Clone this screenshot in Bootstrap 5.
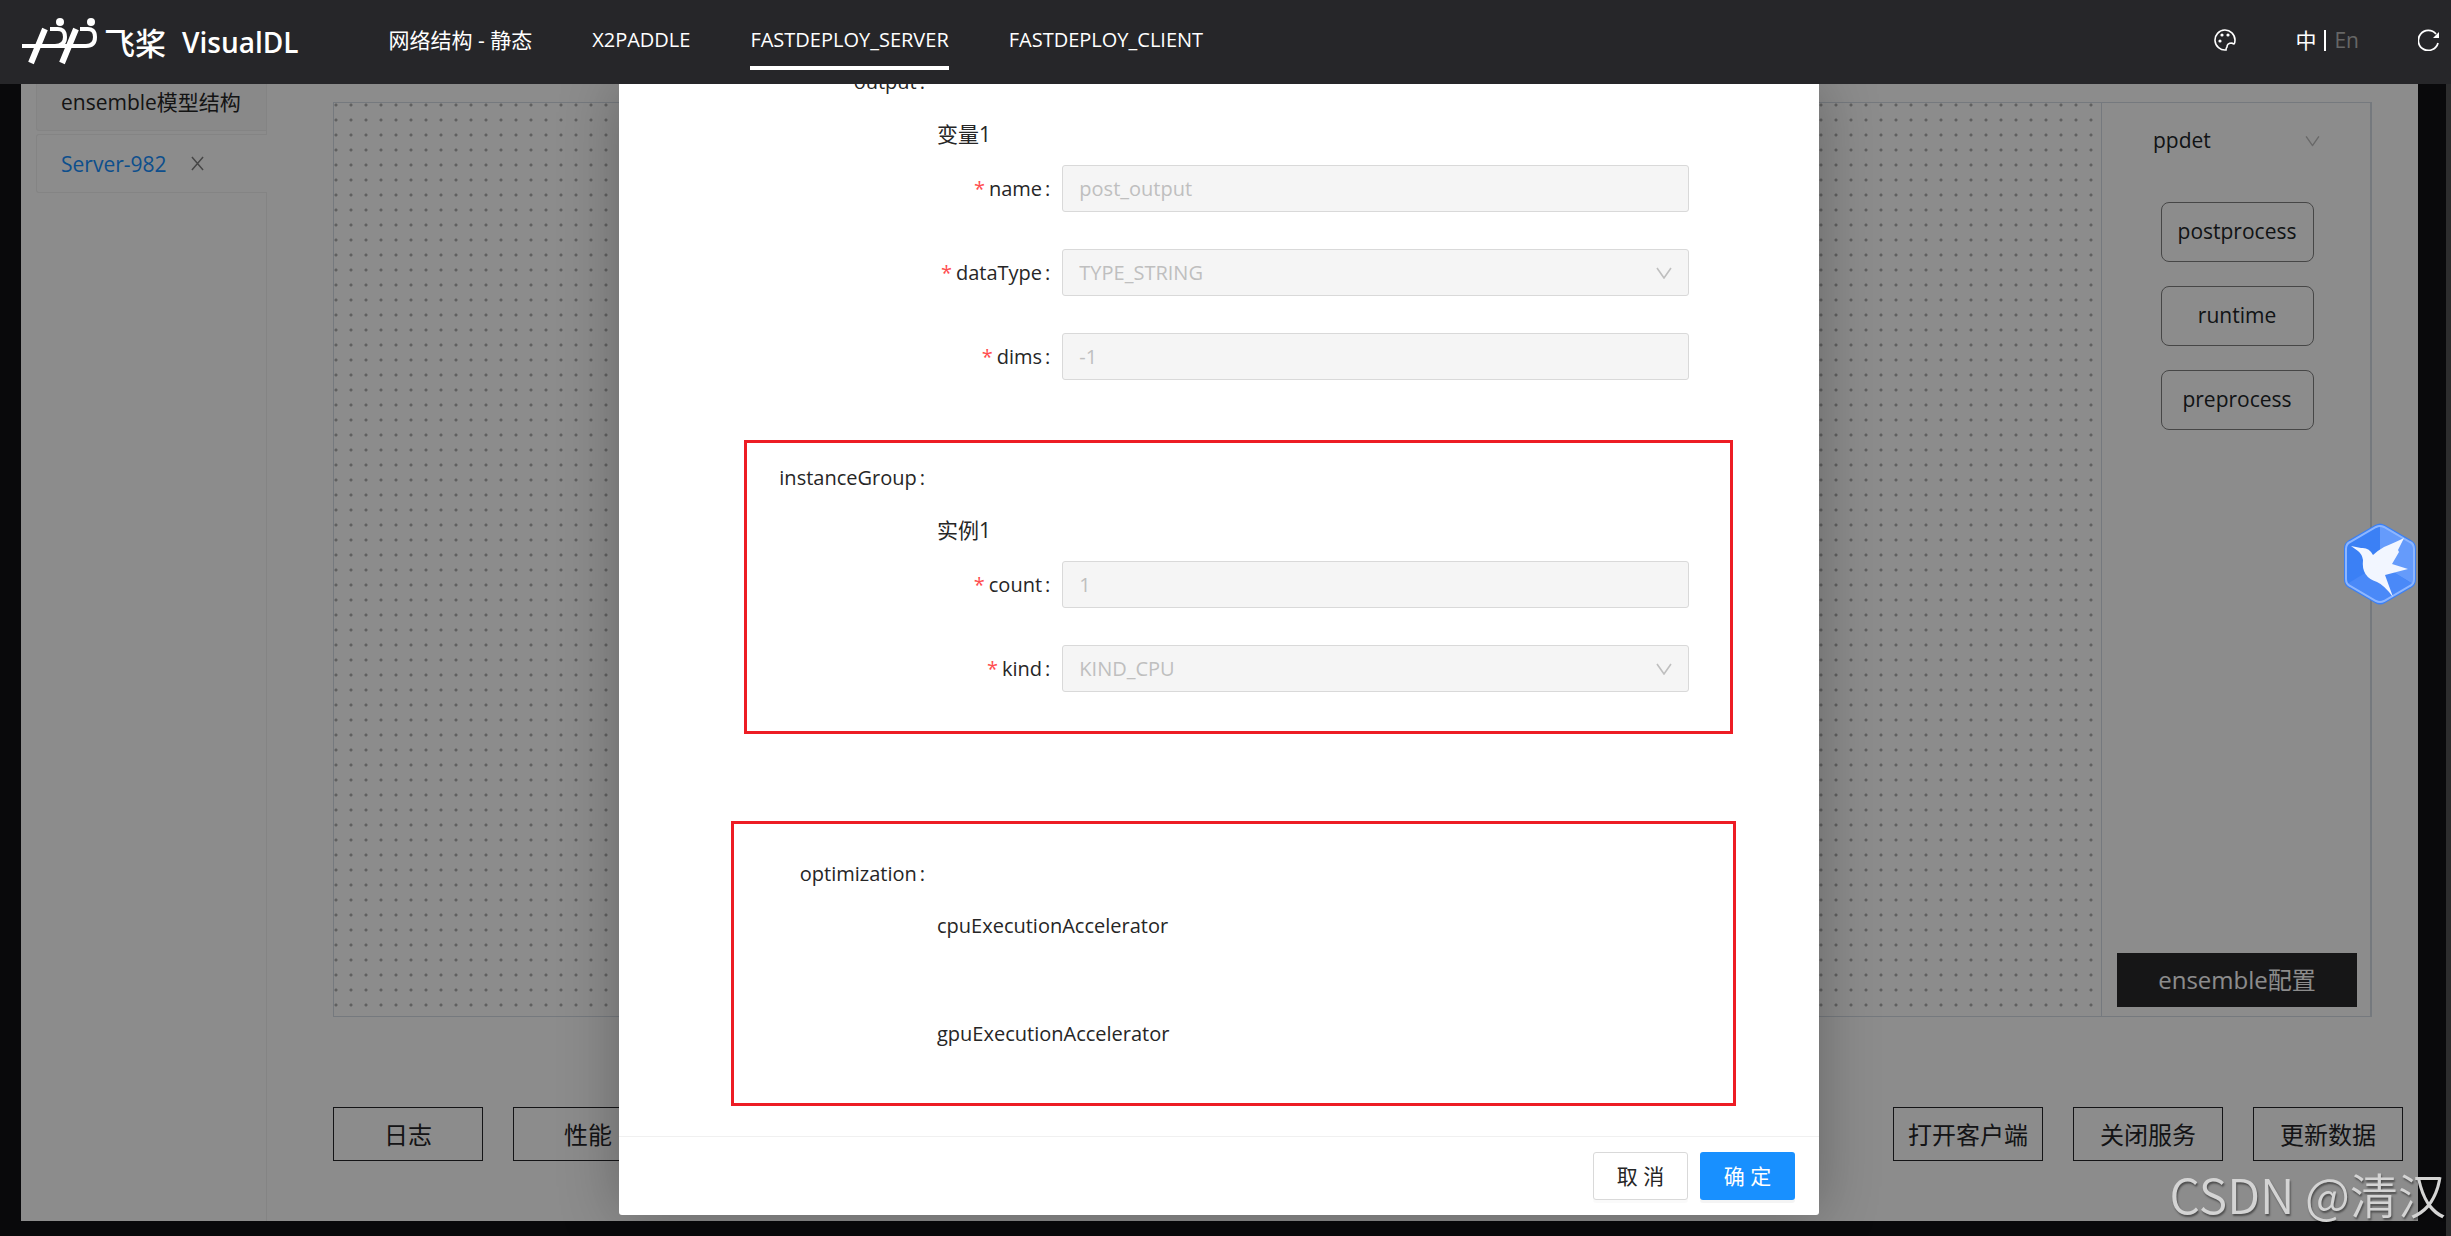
<!DOCTYPE html>
<html lang="zh-CN">
<head>
<meta charset="utf-8">
<meta name="viewport" content="width=device-width, initial-scale=1">
<title>VisualDL</title>
<link href="https://cdn.jsdelivr.net/npm/bootstrap@5.3.0/dist/css/bootstrap.min.css" rel="stylesheet">
<style>
  body { font-family: "Open Sans", "Noto Sans CJK SC", sans-serif; font-size: 20px; line-height: 32px; color: #262626; background: #121214; }
  .zh { font-size: 21px; }
  .topbar { height: 84px; background: #262629; padding: 0 11px 0 20px; z-index: 3; }
  .brand-cn { font-family: "Noto Sans CJK SC", sans-serif; font-weight: 500; font-size: 31px; line-height: 40px; }
  .brand-en { font-weight: 600; font-size: 28px; line-height: 40px; }
  .topnav { margin-left: 90px; gap: 60px; }
  .topnav .nav-link { padding: 22px 0 26px; line-height: 32px; color: #fff; }
  .topnav .active::after { content: ""; position: absolute; left: 0; right: 0; bottom: 12px; height: 4px; background: #fff; }
  .tools { gap: 59px; padding-bottom: 4px; }
  .lang-bar { width: 2px; height: 21px; background: #fff; margin: 0 8px; }
  .lang-off { color: #666; }
  .lower { min-height: 0; }
  .stage { min-height: 0; padding: 0 33px 15px 21px; }
  .scroll-track { width: 5px; background: #525255; }
  .sidebar { width: 246px; padding-left: 15px; }
  .side-tab { border: 1px solid #f0f0f0; padding-left: 24px; }
  .tab-a { height: 47px; background: #fafafa; border-top: 0; border-radius: 0 0 0 3px; padding-bottom: 10px; }
  .side-line { border-right: 1px solid #f0f0f0; min-height: 3px; }
  .tab-b { height: 59px; border-right: 0; border-radius: 3px 0 0 3px; color: #1890ff; font-size: 21px; }
  .workspace { padding: 18px 15px 60px 66px; }
  .board { margin: 0 31px 90px 0; border: 1px solid #d6dde5; border-right-width: 2px; }
  .dots { background: radial-gradient(circle at 2px 2px, #b0b0b0 1px, transparent 2px) 0 0 / 15px 15px; }
  .palette-col { width: 269px; border-left: 1px solid #d6dde5; padding: 14px 13px 9px 15px; }
  .model-pick { width: 200px; margin-bottom: 37px; }
  .model-pick select { height: 48px; padding: 0 16px; border: 0; background: none; font-size: 21px; }
  .node-btn { width: 153px; height: 60px; border: 1px solid #808080; border-radius: 8px; font-size: 21px; padding: 0; }
  .conf-btn { height: 54px; background: #28282b; color: #fff; font-size: 24px; border-radius: 0; }
  .act-row { gap: 30px; }
  .act-btn { width: 150px; height: 54px; border: 1px solid #262629; border-radius: 0; font-size: 24px; padding: 2px 0 0; color: #262629; }
  .shade { background: rgba(0,0,0,.45); padding: 0 13px 21px 0; z-index: 1; }
  .dialog { width: 1200px; border-radius: 0 0 3px 3px; box-shadow: 0 0 60px rgba(0,0,0,.28); }
  .dialog-body { min-height: 0; padding: 0 36px; }
  .row-head, .field { min-height: 48px; }
  .row-head .cap, .field label { line-height: 48px; }
  .colon { margin: 0 12px 0 3px; }
  .sub-head { line-height: 56px; margin-bottom: 3px; }
  .field { margin-bottom: 36px; }
  .req { color: #ff4d4f; margin-right: 4px; }
  .field .form-control, .field .form-select { height: 47px; border: 1px solid #d9d9d9; border-radius: 3px; background: #f5f5f5; color: #bfbfbf; font-size: 20px; padding: 0 16px; opacity: 1; }
  .caret { right: 17px; top: 50%; transform: translateY(-50%); color: #bfbfbf; pointer-events: none; }
  .sec-out { margin-bottom: 37px; }
  .sec-inst { margin-bottom: 121px; }
  .sec-opt { padding-bottom: 74px; }
  .sub-gap { margin-bottom: 52px; }
  .frame { border: 3px solid #ed1c24; pointer-events: none; }
  .frame-inst { top: -14px; bottom: 31px; left: 89px; right: 50px; }
  .frame-inst { bottom: -5px; }
  .frame-opt { top: -29px; bottom: 30px; left: 76px; right: 47px; }
  .dialog-foot { border-top: 1px solid #f0f0f0; padding: 15px 24px; gap: 12px; }
  .dialog-foot .btn { width: 95px; height: 48px; border-radius: 3px; font-size: 21px; padding: 2px 0 0; }
  .btn-no { background: #fff; border: 1px solid #d9d9d9; color: #262626; box-shadow: 0 3px 0 rgba(0,0,0,.02); }
  .btn-yes { background: #1890ff; border: 0; color: #fff; box-shadow: 0 3px 0 rgba(0,0,0,.045); }
  .bird { right: 34px; top: 438px; z-index: 2; }
  .watermark { right: 5px; bottom: 7px; z-index: 4; font-family: "Noto Sans CJK SC", sans-serif; font-weight: 350; font-size: 48px; line-height: 72px; color: #d4d4d4; text-shadow: 1px 2px 2px rgba(0,0,0,.45); pointer-events: none; }
</style>
<script src="https://cdn.jsdelivr.net/npm/bootstrap@5.3.0/dist/js/bootstrap.bundle.min.js"></script>
</head>
<body class="vh-100 d-flex flex-column overflow-hidden">
<header class="topbar d-flex align-items-center flex-shrink-0 position-relative text-white">
  <a href="#" class="d-flex align-items-center text-white text-decoration-none">
    <svg width="80" height="48" viewBox="0 0 80 48" aria-hidden="true" fill="none" stroke="#fff">
      <path d="M25 11 11 45M56 11 42 45" stroke-width="6"/>
      <path d="M2 28H35q10 0 10-9t-9-8h-6M37 28H66q9 0 9-9t-9-8h-6" stroke-width="4"/>
      <circle cx="40" cy="4" r="4" fill="#fff" stroke="none"/><circle cx="71" cy="4" r="4" fill="#fff" stroke="none"/>
    </svg>
    <span class="brand-cn ms-1">飞桨</span>
    <span class="brand-en ms-2 ps-2">VisualDL</span>
  </a>
  <nav class="nav topnav">
    <a class="nav-link zh" href="#">网络结构 - 静态</a>
    <a class="nav-link" href="#">X2PADDLE</a>
    <a class="nav-link active position-relative" href="#">FASTDEPLOY_SERVER</a>
    <a class="nav-link" href="#">FASTDEPLOY_CLIENT</a>
  </nav>
  <div class="tools d-flex align-items-center ms-auto">
    <button class="btn p-0 border-0 text-white d-flex" aria-label="主题"><svg width="22" height="22" viewBox="0 0 22 22" fill="none" stroke="#fff" stroke-width="1.6"><path d="M12 21A10 10 0 1 1 21 11q0 3-1 4-1 0-2-1-5 0-5 4-1 1-1 3z"/><g fill="#fff" stroke="none"><circle cx="8" cy="6" r="1.6"/><circle cx="14" cy="6" r="1.6"/><circle cx="6" cy="12" r="1.6"/></g></svg></button>
    <div class="d-flex align-items-center zh"><span>中</span><span class="lang-bar"></span><span class="lang-off">En</span></div>
    <button class="btn p-0 border-0 text-white d-flex" aria-label="刷新"><svg width="22" height="22" viewBox="0 0 22 22" fill="none" stroke="#fff" stroke-width="1.8"><path d="M20 14A10 10 0 1 1 18 5"/><path d="M21 3v6h-6z" fill="#fff" stroke="none"/></svg></button>
  </div>
</header>

<div class="lower d-flex flex-fill position-relative">
  <main class="stage flex-fill d-flex">
    <div class="flex-fill d-flex bg-white">
      <aside class="sidebar d-flex flex-column flex-shrink-0">
        <div class="side-tab tab-a d-flex align-items-center zh">ensemble模型结构</div>
        <div class="side-line"></div>
        <div class="side-tab tab-b d-flex align-items-center">Server-982
          <button class="btn p-0 border-0 ms-4" aria-label="关闭"><svg class="d-block" width="13" height="15" viewBox="0 0 14 16" stroke="#808080" stroke-width="1.6"><path d="M1 1l12 14M13 1 1 15"/></svg></button>
        </div>
        <div class="side-line flex-fill"></div>
      </aside>
      <section class="workspace flex-fill d-flex flex-column">
        <div class="board flex-fill d-flex">
          <div class="dots flex-fill"></div>
          <div class="palette-col d-flex flex-column align-items-center">
            <div class="model-pick position-relative">
              <select class="form-select" aria-label="模型"><option>ppdet</option></select>
              <svg class="caret position-absolute" width="15" height="11" viewBox="0 0 16 12" fill="none" stroke="currentColor" stroke-width="1.6"><path d="M1 1l7 10 7-10"/></svg>
            </div>
            <div class="d-flex flex-column gap-4">
              <button class="btn node-btn">postprocess</button>
              <button class="btn node-btn">runtime</button>
              <button class="btn node-btn">preprocess</button>
            </div>
            <button class="btn conf-btn w-100 mt-auto">ensemble配置</button>
          </div>
        </div>
        <div class="d-flex justify-content-between">
          <div class="act-row d-flex"><button class="btn act-btn">日志</button><button class="btn act-btn">性能</button></div>
          <div class="act-row d-flex"><button class="btn act-btn">打开客户端</button><button class="btn act-btn">关闭服务</button><button class="btn act-btn">更新数据</button></div>
        </div>
      </section>
    </div>
  </main>
  <div class="scroll-track position-absolute top-0 bottom-0 end-0"></div>

  <div class="shade position-absolute top-0 bottom-0 start-0 end-0 d-flex justify-content-center">
    <div class="dialog bg-white d-flex flex-column" role="dialog" aria-label="配置">
      <form class="dialog-body flex-fill d-flex flex-column justify-content-end overflow-hidden">
        <section class="sec-out">
          <div class="row g-0 row-head"><div class="cap col-3 text-end">output<span class="colon">:</span></div></div>
          <div class="row g-0"><div class="col-8 offset-3">
            <div class="sub-head zh">变量1</div>
            <div class="row g-0 field"><label class="col-2 text-end" for="f1"><span class="req">*</span>name<span class="colon">:</span></label><div class="col-10"><input id="f1" class="form-control" value="post_output" disabled></div></div>
            <div class="row g-0 field"><label class="col-2 text-end" for="f2"><span class="req">*</span>dataType<span class="colon">:</span></label><div class="col-10 position-relative"><select id="f2" class="form-select" disabled><option>TYPE_STRING</option></select><svg class="caret position-absolute" width="16" height="12" viewBox="0 0 16 12" fill="none" stroke="currentColor" stroke-width="1.6"><path d="M1 1l7 10 7-10"/></svg></div></div>
            <div class="row g-0 field"><label class="col-2 text-end" for="f3"><span class="req">*</span>dims<span class="colon">:</span></label><div class="col-10"><input id="f3" class="form-control" value="-1" disabled></div></div>
          </div></div>
        </section>
        <section class="sec-inst position-relative">
          <div class="row g-0 row-head"><div class="cap col-3 text-end">instanceGroup<span class="colon">:</span></div></div>
          <div class="row g-0"><div class="col-8 offset-3">
            <div class="sub-head zh">实例1</div>
            <div class="row g-0 field"><label class="col-2 text-end" for="f4"><span class="req">*</span>count<span class="colon">:</span></label><div class="col-10"><input id="f4" class="form-control" value="1" disabled></div></div>
            <div class="row g-0 field"><label class="col-2 text-end" for="f5"><span class="req">*</span>kind<span class="colon">:</span></label><div class="col-10 position-relative"><select id="f5" class="form-select" disabled><option>KIND_CPU</option></select><svg class="caret position-absolute" width="16" height="12" viewBox="0 0 16 12" fill="none" stroke="currentColor" stroke-width="1.6"><path d="M1 1l7 10 7-10"/></svg></div></div>
          </div></div>
          <div class="frame frame-inst position-absolute"></div>
        </section>
        <section class="sec-opt position-relative">
          <div class="row g-0 row-head"><div class="cap col-3 text-end">optimization<span class="colon">:</span></div></div>
          <div class="row g-0"><div class="col-8 offset-3">
            <div class="sub-head sub-gap">cpuExecutionAccelerator</div>
            <div class="sub-head mb-0">gpuExecutionAccelerator</div>
          </div></div>
          <div class="frame frame-opt position-absolute"></div>
        </section>
      </form>
      <div class="dialog-foot d-flex justify-content-end">
        <button class="btn btn-no">取 消</button><button class="btn btn-yes">确 定</button>
      </div>
    </div>
  </div>

  <svg class="bird position-absolute" width="74" height="84" viewBox="0 0 74 84" aria-hidden="true">
    <path d="M32 3q5-3 10 0l26 15q5 3 5 8v32q0 5-5 8L42 81q-5 3-10 0L6 66q-5-3-5-8V26q0-5 5-8z" fill="#3b80f5"/>
    <path d="M37 4q2 0 4 1l26 15q4 2 4 7v30q0 4-1 5L37 42z" fill="#659bfb"/>
    <path d="M4 62 37 42l33 20-29 18q-4 2-8 0z" fill="#4a89f8"/>
    <path d="M33 5q4-2 8 0l26 15q4 2 4 7v30q0 5-4 7L41 79q-4 2-8 0L7 64q-4-2-4-7V27q0-5 4-7z" fill="none" stroke="#8db6ff" stroke-width="2"/>
    <path d="M8 24 18 26q8-1 12 7 4-4 11-8 12-5 20-9l-6 12 1 2-7 12 16 5-23 6 8 22q-9-12-16-15-16-5-14-22-1-6-5-9z" fill="#f2f6ff"/>
  </svg>
</div>
<div class="watermark position-fixed">CSDN @清汉</div>
</body>
</html>
